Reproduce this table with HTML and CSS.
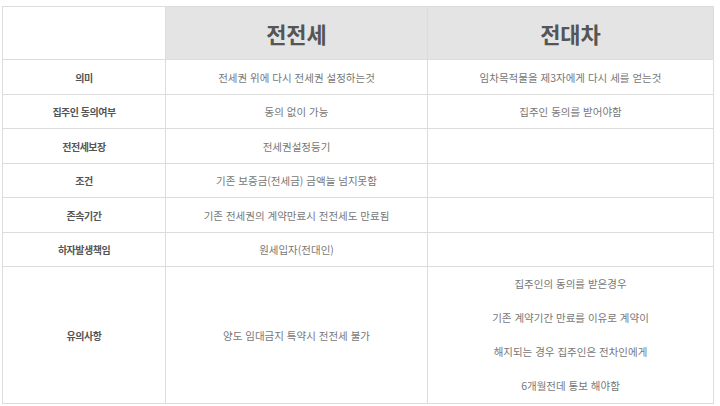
FILE: index.html
```html
<!DOCTYPE html>
<html lang="ko">
<head>
<meta charset="utf-8">
<link rel="stylesheet" href="styles.css">
</head>
<body>
<div class="wrap">
<table class="cmp">
  <colgroup>
    <col class="c1">
    <col class="c2">
    <col class="c3">
  </colgroup>
  <thead>
    <tr class="head">
      <th class="blank"></th>
      <th>전전세</th>
      <th>전대차</th>
    </tr>
  </thead>
  <tbody>
    <tr class="r35">
      <th>의미</th>
      <td>전세권 위에 다시 전세권 설정하는것</td>
      <td>임차목적물을 제3자에게 다시 세를 얻는것</td>
    </tr>
    <tr class="r34">
      <th>집주인 동의여부</th>
      <td>동의 없이 가능</td>
      <td>집주인 동의를 받어야함</td>
    </tr>
    <tr class="r35">
      <th>전전세보장</th>
      <td>전세권설정등기</td>
      <td></td>
    </tr>
    <tr class="r34">
      <th>조건</th>
      <td>기존 보증금(전세금) 금액늘 넘지못함</td>
      <td></td>
    </tr>
    <tr class="r35">
      <th>존속기간</th>
      <td>기존 전세권의 계약만료시 전전세도 만료됨</td>
      <td></td>
    </tr>
    <tr class="r34">
      <th>하자발생책임</th>
      <td>원세입자(전대인)</td>
      <td></td>
    </tr>
    <tr class="tall">
      <th>유의사항</th>
      <td>양도 임대금지 특약시 전전세 불가</td>
      <td>
        <p>집주인의 동의를 받은경우</p>
        <p>기존 계약기간 만료를 이유로 계약이</p>
        <p>해지되는 경우 집주인은 전차인에게</p>
        <p>6개월전데 통보 해야함</p>
      </td>
    </tr>
  </tbody>
</table>
</div>
</body>
</html>
```

FILE: styles.css
```css
html, body {
  margin: 0;
  padding: 0;
  background: #fff;
}
body {
  font-family: "Noto Sans CJK KR", "Noto Sans", sans-serif;
}
.wrap {
  padding: 6px 7px 0 2px;
}
.cmp {
  width: 711px;
  border-collapse: collapse;
  table-layout: fixed;
}
.c1 { width: 163px; }
.c2 { width: 262px; }
.c3 { width: 286px; }
.cmp th, .cmp td {
  border: 1px solid #dcdcdc;
  text-align: center;
  vertical-align: middle;
  padding: 0;
}
.head th {
  height: 52px;
  background: #e4e4e4;
  color: #555;
  font-size: 22px;
  font-weight: 700;
}
.head th.blank {
  background: #fff;
}
tbody th {
  font-size: 10px;
  font-weight: 700;
  color: #555;
  letter-spacing: -0.5px;
}
tbody td {
  font-size: 10.5px;
  color: #777;
}
.r35 th, .r35 td { height: 34px; }
.r34 th, .r34 td { height: 33px; }
.tall th, .tall td { height: 133px; }
.tall p {
  margin: 0;
  line-height: 34px;
}
```
